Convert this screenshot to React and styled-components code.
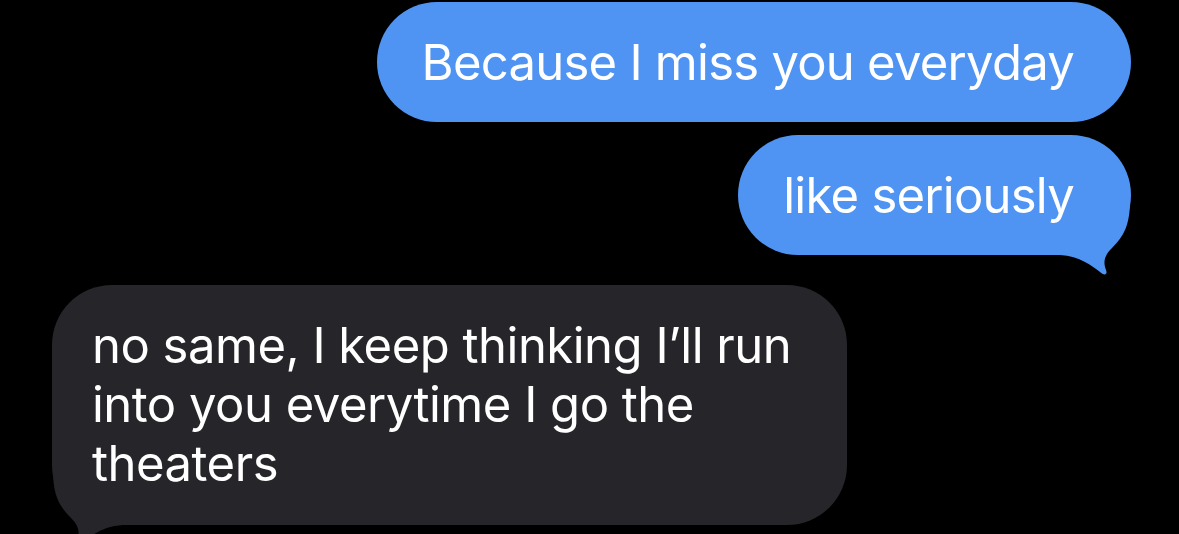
import React from 'react'
import styled, { createGlobalStyle } from 'styled-components'

const GlobalStyle = createGlobalStyle`
  html, body {
    margin: 0;
    padding: 0;
    background: #000;
    overflow: hidden;
  }
  body {
    font-family: Inter, "Noto Sans", "Liberation Sans", sans-serif;
    -webkit-font-smoothing: antialiased;
  }
`

const Thread = styled.div`
  width: 1179px;
  height: 534px;
  overflow: hidden;
  background: #000;
  display: flex;
  flex-direction: column;
  padding: 2px 48px 0 52px;
  box-sizing: border-box;
`

const Row = styled.div`
  display: flex;
  justify-content: ${p => (p.$mine ? 'flex-end' : 'flex-start')};
  margin-top: ${p => p.$gap || 0}px;
`

const Bubble = styled.div`
  position: relative;
  isolation: isolate;
  background: ${p => (p.$mine ? '#4f94f3' : '#262529')};
  color: #fff;
  border-radius: 60px;
  font-size: 49px;
  line-height: 59px;
  letter-spacing: ${p => (p.$mine ? '-0.75px' : '-0.5px')};
  padding: ${p => (p.$mine ? '31px 57px 30px 45px' : '31px 56px 32px 40px')};
  white-space: nowrap;
`

const Tail = styled.svg`
  position: absolute;
  z-index: -1;
  bottom: -25px;
  ${p => (p.$left ? 'left: -9px; transform: scaleX(-1);' : 'right: -9px;')}
  width: 90px;
  height: 90px;
  fill: ${p => p.$color};
`

const BubbleTail = ({ left, color }) => (
  <Tail $left={left} $color={color} viewBox="0 0 90 90">
    <path d="M10,65 C30,66 42,76 50,82 C54,86 58,85 56,80 C53,72 54,66 62,58 C74,46 80,35 80,10 L20,10 Z" />
  </Tail>
)

export default function App() {
  return (
    <>
      <GlobalStyle />
      <Thread>
        <Row $mine>
          <Bubble $mine>Because I miss you everyday</Bubble>
        </Row>
        <Row $mine $gap={13}>
          <Bubble $mine>
            like seriously
            <BubbleTail color="#4f94f3" />
          </Bubble>
        </Row>
        <Row $gap={30}>
          <Bubble>
            no same, I keep thinking I’ll run
            <br />
            into you everytime I go the
            <br />
            theaters
            <BubbleTail left color="#262529" />
          </Bubble>
        </Row>
      </Thread>
    </>
  )
}
